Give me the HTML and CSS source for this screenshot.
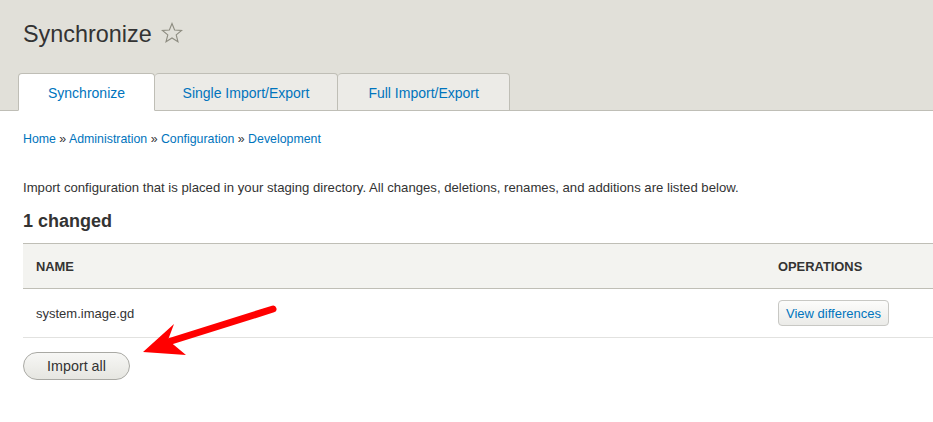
FILE: index.html
```html
<!DOCTYPE html>
<html lang="en">
<head>
<meta charset="utf-8">
<title>Synchronize</title>
<link rel="stylesheet" href="styles.css">
</head>
<body>
<header class="page-header">
  <div class="title-row">
    <h1 class="page-title">Synchronize</h1>
    <svg class="star" width="22" height="22" viewBox="0 0 22 22" aria-hidden="true">
      <path d="M11 1.5 L13.6 8 L20.6 8.4 L15.2 12.9 L17 19.8 L11 16 L5 19.8 L6.8 12.9 L1.4 8.4 L8.4 8 Z" fill="none" stroke="#8d8c80" stroke-width="1.1" stroke-linejoin="miter"/>
    </svg>
  </div>
  <nav class="tabs">
    <a class="tab tab-active" href="#">Synchronize</a>
    <a class="tab tab-narrow" href="#">Single Import/Export</a>
    <a class="tab tab-wide" href="#">Full Import/Export</a>
  </nav>
</header>
<main class="content">
  <div class="breadcrumb">
    <a href="#">Home</a> » <a href="#">Administration</a> » <a href="#">Configuration</a> » <a href="#">Development</a>
  </div>
  <p class="intro">Import configuration that is placed in your staging directory. All changes, deletions, renames, and additions are listed below.</p>
  <h2 class="section-title">1 changed</h2>
  <table class="config-table">
    <thead>
      <tr><th>Name</th><th class="col-ops">Operations</th></tr>
    </thead>
    <tbody>
      <tr><td>system.image.gd</td><td class="col-ops"><button class="btn-small">View differences</button></td></tr>
    </tbody>
  </table>
  <button class="btn-import">Import all</button>
</main>
<svg class="annotation" width="933" height="422" viewBox="0 0 933 422" aria-hidden="true">
  <line x1="273" y1="309" x2="168" y2="342" stroke="#ff0000" stroke-width="7" stroke-linecap="round"/>
  <polygon points="143,352 174,324 168,340 186,355" fill="#ff0000"/>
</svg>
</body>
</html>
```
FILE: styles.css
```css
* { box-sizing: border-box; }

body {
  margin: 0;
  font-family: "Liberation Sans", Arial, sans-serif;
  color: #333;
  background: #fff;
  position: relative;
  overflow: hidden;
}

.page-header {
  background: #e1e0d9;
  border-bottom: 1px solid #bfbeb6;
  padding: 17px 0 0 18px;
}

.title-row {
  display: flex;
  align-items: center;
  gap: 9px;
  padding-left: 5px;
  height: 34px;
}

.page-title {
  margin: 0;
  font-size: 23.4px;
  font-weight: normal;
  color: #333;
  line-height: 34px;
}

.star { display: block; margin-top: -2px; }

.tabs {
  display: flex;
  margin-top: 22px;
  margin-bottom: -1px;
}

.tab {
  display: block;
  height: 38px;
  line-height: 38px;
  padding: 0 29px;
  font-size: 14px;
  color: #0074bd;
  text-decoration: none;
  background: #ecebe7;
  border: 1px solid #bfbeb6;
  border-left: none;
  border-radius: 4px 4px 0 0;
}

.tab:first-child { border-left: 1px solid #bfbeb6; }

.tab-narrow { padding: 0 27.5px; }

.tab-wide { padding: 0 30.5px; }

.tab-active {
  background: #fff;
  border-bottom-color: #fff;
}

.content {
  padding: 0 0 0 23px;
}

.breadcrumb {
  font-size: 12.35px;
  padding-top: 21px;
  line-height: 15px;
  color: #333;
}

.breadcrumb a { color: #0074bd; text-decoration: none; }

.intro {
  font-size: 13.15px;
  line-height: 18px;
  margin: 32px 0 0;
}

.section-title {
  margin: 12px 0 0;
  font-size: 18px;
  font-weight: bold;
  line-height: 24px;
  color: #333;
}

.config-table {
  margin-top: 10px;
  width: 910px;
  border-collapse: collapse;
  font-size: 13px;
}

.config-table th {
  text-align: left;
  text-transform: uppercase;
  font-weight: bold;
  font-size: 12.9px;
  color: #333;
  background: #f3f3f0;
  height: 45px;
  padding: 0 13px;
  border-top: 1px solid #bfbeb6;
  border-bottom: 1px solid #bfbeb6;
}

.config-table td {
  height: 49px;
  padding: 0 13px;
  border-bottom: 1px solid #e2e2e0;
}

.config-table .col-ops { width: 168px; }

.btn-small {
  font-family: inherit;
  font-size: 13px;
  color: #0074bd;
  height: 26px;
  padding: 0 7px;
  border: 1px solid #c8c8c4;
  border-radius: 4px;
  background: linear-gradient(#fcfcfb, #ebebe8);
  cursor: pointer;
}

.btn-import {
  display: block;
  margin-top: 14px;
  width: 107px;
  height: 28px;
  font-family: inherit;
  font-size: 14.3px;
  color: #333;
  border: 1px solid #a9a9a4;
  border-radius: 14px;
  background: linear-gradient(#f7f7f5, #e6e6e1);
  padding: 0;
}

.annotation {
  position: absolute;
  left: 0;
  top: 0;
  pointer-events: none;
}
```
